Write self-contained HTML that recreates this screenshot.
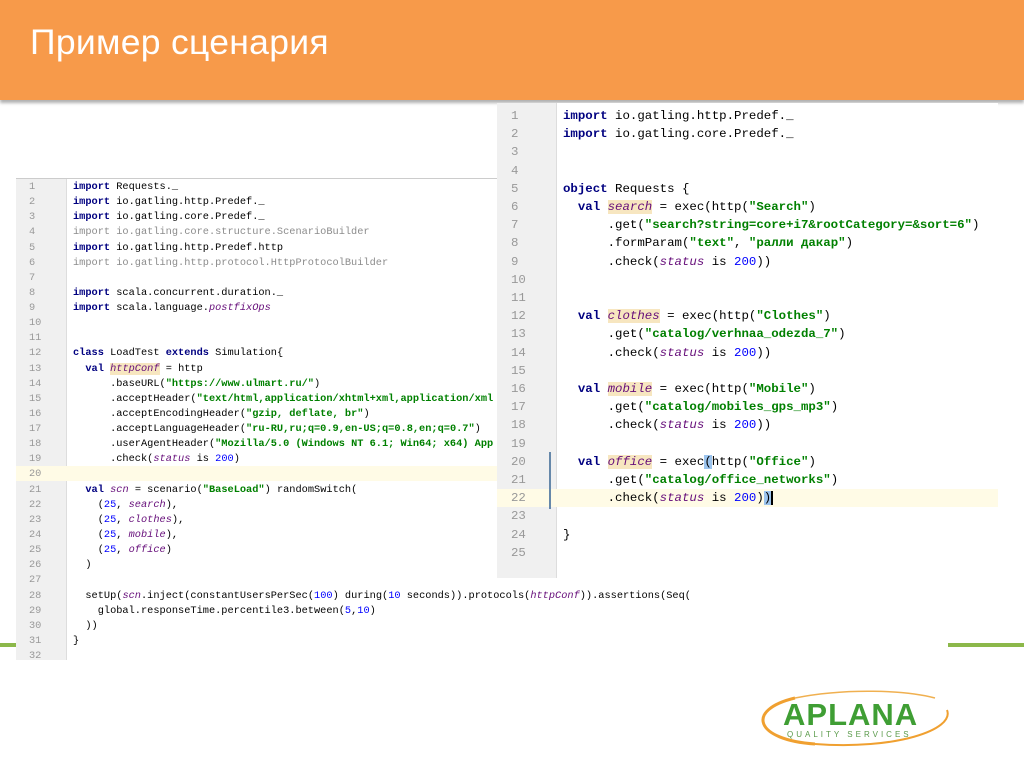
<!DOCTYPE html>
<html><head><meta charset="utf-8"><style>
*{margin:0;padding:0;box-sizing:border-box}
body{width:1024px;height:767px;background:#fff;position:relative;overflow:hidden;font-family:"Liberation Sans",sans-serif}
.hdr{position:absolute;left:0;top:0;width:1024px;height:100px;background:#f79a4a;box-shadow:0 3px 3px #b0b0b0}
.hdr h1{position:absolute;left:30px;top:22px;font-weight:normal;color:#fff;font-size:35.5px;font-family:"Liberation Sans","DejaVu Sans",sans-serif;letter-spacing:0.3px}
.ed{position:absolute;background:#fff;font-family:"Liberation Mono",monospace;white-space:pre;color:#000}
.g{position:absolute;top:0;bottom:0;background:#f0f0f0;border-right:1px solid #ddd}
.ln{position:absolute;color:#999}
.cl{position:absolute}
.k{color:#000080;font-weight:bold}
.s{color:#008000;font-weight:bold}
.i{color:#660e7a;font-style:italic}
.n{color:#0000ff}
.gr{color:#8c8c8c}
.v{background:#f7e6c0}
.hl{position:absolute;background:#fffbe6}
</style></head><body>
<div class="hdr"><h1>Пример сценария</h1></div>
<div style="position:absolute;left:0;top:643px;width:20px;height:4px;background:#8cb84a"></div>
<div style="position:absolute;left:948px;top:643px;width:76px;height:4px;background:#8cb84a"></div>

<!-- left editor -->
<div class="ed" id="L" style="left:16px;top:178px;width:481px;height:482px;border-top:1px solid #ccc;font-size:10.3px;line-height:15.13px">
<div class="g" style="left:0;width:51px"></div>
<div class="hl" style="left:0;width:481px;top:287px;height:15px"></div>
<div id="Lc" style="position:absolute;left:0;top:1px;width:481px"></div>
</div>

<!-- right editor -->
<div class="ed" style="left:497px;top:103px;width:501px;height:475px;font-size:12.4px;line-height:18.2px">
<div class="g" style="left:0;width:60px"></div>
<div class="hl" style="left:0;width:501px;top:386px;height:18px"></div>
<div style="position:absolute;left:52px;top:349px;width:2px;height:57px;background:#6688aa"></div>
<div id="Rc" style="position:absolute;left:0;top:4px;width:501px"></div>
</div>

<!-- logo -->
<svg style="position:absolute;left:755px;top:680px" width="205" height="75" viewBox="0 0 205 75">
<path d="M40 18 C-10 30 0 60 60 64" fill="none" stroke="#f0a030" stroke-width="3"/>
<path d="M60 64 C140 70 200 50 192 30" fill="none" stroke="#f0a030" stroke-width="2"/>
<path d="M40 18 C90 8 150 10 180 18" fill="none" stroke="#f0b050" stroke-width="1.5"/>
<text x="28" y="45" font-family="Liberation Sans,sans-serif" font-size="31" font-weight="bold" fill="#3f9e34" letter-spacing="1">APLANA</text>
<text x="32" y="57" font-family="Liberation Sans,sans-serif" font-size="8" fill="#5a9a4a" letter-spacing="3">QUALITY SERVICES</text>
</svg>

<script>
function render(id,lines,numX,codeX,lh,cw){
 var c=document.getElementById(id),h='';
 lines.forEach(function(t,i){
  h+='<div class="ln" style="left:'+numX+'px;top:'+(i*lh)+'px">'+(i+1)+'</div>';
  h+='<div class="cl" style="left:'+codeX+'px;top:'+(i*lh)+'px">'+t+'</div>';
 });
 c.innerHTML=h;
}
var K=function(t){return '<span class="k">'+t+'</span>'},S=function(t){return '<span class="s">'+t+'</span>'},I=function(t){return '<span class="i">'+t+'</span>'},N=function(t){return '<span class="n">'+t+'</span>'};
var L=[
K('import')+' Requests._',
K('import')+' io.gatling.http.Predef._',
K('import')+' io.gatling.core.Predef._',
'<span class="gr">import io.gatling.core.structure.ScenarioBuilder</span>',
K('import')+' io.gatling.http.Predef.http',
'<span class="gr">import io.gatling.http.protocol.HttpProtocolBuilder</span>',
'',
K('import')+' scala.concurrent.duration._',
K('import')+' scala.language.'+I('postfixOps'),
'','',
K('class')+' LoadTest '+K('extends')+' Simulation{',
'  '+K('val')+' <span class="i v">httpConf</span> = http',
'      .baseURL('+S('"https://www.ulmart.ru/"')+')',
'      .acceptHeader('+S('"text/html,application/xhtml+xml,application/xml')+'',
'      .acceptEncodingHeader('+S('"gzip, deflate, br"')+')',
'      .acceptLanguageHeader('+S('"ru-RU,ru;q=0.9,en-US;q=0.8,en;q=0.7"')+')',
'      .userAgentHeader('+S('"Mozilla/5.0 (Windows NT 6.1; Win64; x64) App')+'',
'      .check('+I('status')+' is '+N('200')+')',
'',
'  '+K('val')+' '+I('scn')+' = scenario('+S('"BaseLoad"')+') randomSwitch(',
'    ('+N('25')+', '+I('search')+'),',
'    ('+N('25')+', '+I('clothes')+'),',
'    ('+N('25')+', '+I('mobile')+'),',
'    ('+N('25')+', '+I('office')+')',
'  )',
'',
'  setUp('+I('scn')+'.inject(constantUsersPerSec('+N('100')+') during('+N('10')+' seconds)).protocols('+I('httpConf')+')).assertions(Seq(',
'    global.responseTime.percentile3.between('+N('5')+','+N('10')+')',
'  ))',
'}',
''];
render('Lc',L,13,57,15.13);
var R=[
K('import')+' io.gatling.http.Predef._',
K('import')+' io.gatling.core.Predef._',
'','',
K('object')+' Requests {',
'  '+K('val')+' <span class="i v">search</span> = exec(http('+S('"Search"')+')',
'      .get('+S('"search?string=core+i7&amp;rootCategory=&amp;sort=6"')+')',
'      .formParam('+S('"text"')+', '+S('"ралли дакар"')+')',
'      .check('+I('status')+' is '+N('200')+'))',
'','',
'  '+K('val')+' <span class="i v">clothes</span> = exec(http('+S('"Clothes"')+')',
'      .get('+S('"catalog/verhnaa_odezda_7"')+')',
'      .check('+I('status')+' is '+N('200')+'))',
'',
'  '+K('val')+' <span class="i v">mobile</span> = exec(http('+S('"Mobile"')+')',
'      .get('+S('"catalog/mobiles_gps_mp3"')+')',
'      .check('+I('status')+' is '+N('200')+'))',
'',
'  '+K('val')+' <span class="i v">office</span> = exec<span style="background:#9cc4ee">(</span>http('+S('"Office"')+')',
'      .get('+S('"catalog/office_networks"')+')',
'      .check('+I('status')+' is '+N('200')+')<span style="background:#9cc4ee">)</span><span style="border-left:2px solid #000"></span>',
'','}',''];
render('Rc',R,14,66,18.2);
</script>
</body></html>
